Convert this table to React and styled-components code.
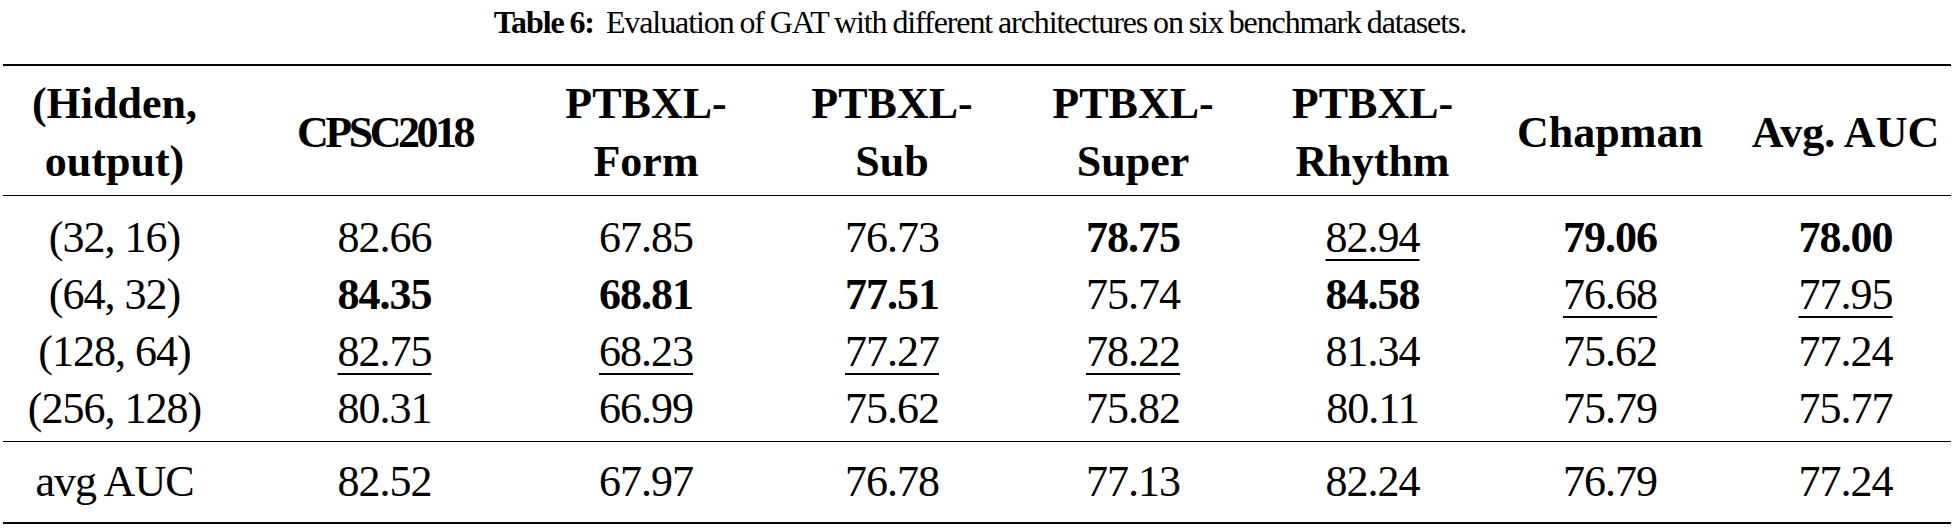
import React from 'react';
import styled, { createGlobalStyle } from 'styled-components';

const FONT = '"Liberation Serif", "DejaVu Serif", "Times New Roman", Times, serif';

const Global = createGlobalStyle`
  html, body { margin: 0; padding: 0; background: #ffffff; }
  body {
    font-family: ${FONT};
    color: #000000;
  }
`;

const Page = styled.div`
  width: 1955px;
  height: 529px;
  box-sizing: border-box;
  padding: 0 4px 0 3px;
  overflow: hidden;
  font-family: ${FONT};
  color: #000;
`;

const Caption = styled.div`
  height: 64px;
  box-sizing: border-box;
  padding-top: 2px;
  padding-left: 6px;
  text-align: center;
  font-family: ${FONT};
  font-size: 32px;
  line-height: 40px;
  letter-spacing: -1.1px;
  word-spacing: -1px;
`;

const CaptionLabel = styled.span`
  font-weight: 700;
  margin-right: 12px;
`;

const Table = styled.table`
  width: 1948px;
  border-collapse: collapse;
  table-layout: fixed;
  border-top: 2px solid #000;
  border-bottom: 2px solid #000;
  font-family: ${FONT};
  font-size: 44px;
`;

const Head = styled.thead`
  border-bottom: 1.5px solid #000;
`;

const Body = styled.tbody`
  border-bottom: ${(p) => (p.$ruled ? '1.5px solid #000' : 'none')};
`;

const HeadCell = styled.th`
  height: 130px;
  box-sizing: border-box;
  padding: 6px 0 0;
  padding-left: ${(p) => p.$pl || 0}px;
  padding-right: ${(p) => p.$pr || 0}px;
  font-family: ${FONT};
  font-size: 44px;
  font-weight: 700;
  line-height: 58px;
  letter-spacing: ${(p) => p.$track || 0}px;
  text-align: center;
  vertical-align: middle;
  white-space: pre-line;
`;

const Cell = styled.td`
  padding: 0;
  padding-top: ${(p) => p.$pt || 0}px;
  padding-bottom: ${(p) => p.$pb || 0}px;
  padding-left: ${(p) => p.$pl || 0}px;
  padding-right: ${(p) => p.$pr || 0}px;
  height: ${(p) => p.$h || 57}px;
  font-family: ${FONT};
  line-height: 57px;
  letter-spacing: -1px;
  text-align: center;
  vertical-align: middle;
  white-space: nowrap;
`;

const Best = styled.span`
  font-weight: 700;
`;

const Second = styled.span`
  text-decoration: underline;
  text-decoration-thickness: 2px;
  text-underline-offset: 7px;
`;

const widths = [245, 273, 250, 242, 240, 239, 236, 223];
const pads = [
  { pr: 22 },
  {},
  {},
  {},
  {},
  {},
  {},
  { pl: 12 },
];

const headers = [
  { text: '(Hidden,\noutput)' },
  { text: 'CPSC2018', track: -3.5 },
  { text: 'PTBXL-\nForm' },
  { text: 'PTBXL-\nSub' },
  { text: 'PTBXL-\nSuper' },
  { text: 'PTBXL-\nRhythm' },
  { text: 'Chapman' },
  { text: 'Avg. AUC' },
];

// b = bold (best), u = underline (second best)
const rows = [
  ['(32, 16)', '82.66', '67.85', '76.73', ['78.75', 'b'], ['82.94', 'u'], ['79.06', 'b'], ['78.00', 'b']],
  ['(64, 32)', ['84.35', 'b'], ['68.81', 'b'], ['77.51', 'b'], '75.74', ['84.58', 'b'], ['76.68', 'u'], ['77.95', 'u']],
  ['(128, 64)', ['82.75', 'u'], ['68.23', 'u'], ['77.27', 'u'], ['78.22', 'u'], '81.34', '75.62', '77.24'],
  ['(256, 128)', '80.31', '66.99', '75.62', '75.82', '80.11', '75.79', '75.77'],
];

const avg = ['avg AUC', '82.52', '67.97', '76.78', '77.13', '82.24', '76.79', '77.24'];

function Value({ v }) {
  if (Array.isArray(v)) {
    const [text, kind] = v;
    if (kind === 'b') return <Best>{text}</Best>;
    return <Second>{text}</Second>;
  }
  return v;
}

export default function App() {
  return (
    <>
      <Global />
      <Page>
        <Caption>
          <CaptionLabel>Table 6:</CaptionLabel>
          Evaluation of GAT with different architectures on six benchmark datasets.
        </Caption>
        <Table>
          <colgroup>
            {widths.map((w, i) => (
              <col key={i} style={{ width: w }} />
            ))}
          </colgroup>
          <Head>
            <tr>
              {headers.map((h, i) => (
                <HeadCell key={i} $pl={pads[i].pl} $pr={pads[i].pr} $track={h.track}>
                  {h.text}
                </HeadCell>
              ))}
            </tr>
          </Head>
          <Body $ruled>
            {rows.map((r, ri) => (
              <tr key={ri}>
                {r.map((v, ci) => (
                  <Cell
                    key={ci}
                    $pl={pads[ci].pl}
                    $pr={pads[ci].pr}
                    $pt={ri === 0 ? 13 : 0}
                    $pb={ri === rows.length - 1 ? 4 : 0}
                  >
                    <Value v={v} />
                  </Cell>
                ))}
              </tr>
            ))}
          </Body>
          <Body>
            <tr>
              {avg.map((v, ci) => (
                <Cell key={ci} $pl={pads[ci].pl} $pr={pads[ci].pr} $h={80}>
                  {v}
                </Cell>
              ))}
            </tr>
          </Body>
        </Table>
      </Page>
    </>
  );
}
